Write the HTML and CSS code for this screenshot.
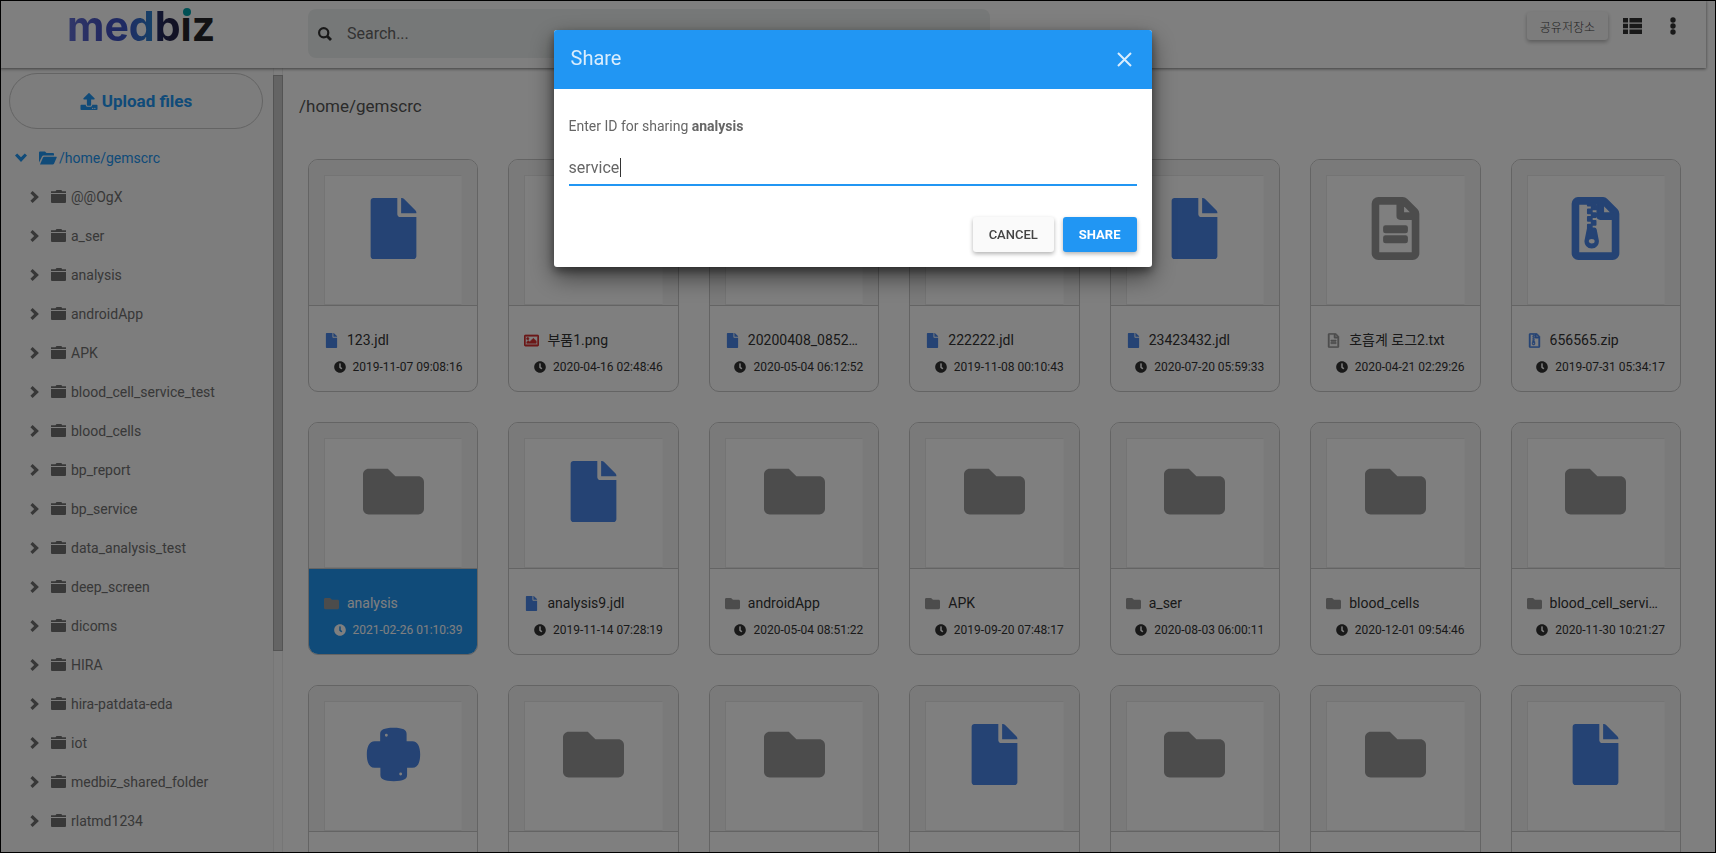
FILE: index.html
```html
<!DOCTYPE html>
<html lang="ko">
<head>
<meta charset="utf-8">
<title>medbiz</title>
<link rel="stylesheet" href="styles.css">
</head>
<body>
<svg class="sprite" aria-hidden="true">
  <symbol id="file" viewBox="0 0 384 512"><path d="M224 136V0H24C10.700 0 0 10.700 0 24v464c0 13.300 10.700 24 24 24h336c13.300 0 24-10.700 24-24V160H248c-13.200 0-24-10.800-24-24zm160-14.100v6.100H256V0h6.100c6.400 0 12.500 2.500 17 7l97.900 98c4.500 4.500 7 10.600 7 16.900z"/></symbol>
  <symbol id="folder" viewBox="0 0 512 512"><path d="M464 128H272l-64-64H48C21.490 64 0 85.490 0 112v288c0 26.510 21.490 48 48 48h416c26.510 0 48-21.490 48-48V176c0-26.510-21.490-48-48-48z"/></symbol>
  <symbol id="text" viewBox="-8 -8 400 528"><path stroke="currentColor" stroke-width="16" stroke-linejoin="round" d="M288 248v28c0 6.600-5.400 12-12 12H108c-6.600 0-12-5.400-12-12v-28c0-6.600 5.400-12 12-12h168c6.600 0 12 5.400 12 12zm-12 72H108c-6.600 0-12 5.400-12 12v28c0 6.600 5.400 12 12 12h168c6.600 0 12-5.400 12-12v-28c0-6.600-5.400-12-12-12zm108-188.100V464c0 26.500-21.500 48-48 48H48c-26.500 0-48-21.500-48-48V48C0 21.500 21.500 0 48 0h204.100C264.800 0 277 5.100 286 14.100L369.900 98c9 8.900 14.100 21.200 14.100 33.900zm-128-80V128h76.100L256 51.900zM336 464V176H232c-13.300 0-24-10.700-24-24V48H48v416h288z"/></symbol>
  <symbol id="zip" viewBox="-8 -8 400 528"><path stroke="currentColor" stroke-width="16" stroke-linejoin="round" d="M128.300 160v32h32v-32zm64-96h-32v32h32zm-64 32v32h32V96zm64 32h-32v32h32zm177.600-30.100L286 14C277 5 264.800-.1 252.100-.1H48C21.500 0 0 21.500 0 48v416c0 26.500 21.500 48 48 48h288c26.500 0 48-21.500 48-48V131.900c0-12.700-5.100-25-14.100-34zM256 51.900l76.100 76.100H256zM336 464H48V48h79.700v16h32V48H208v104c0 13.300 10.700 24 24 24h104zM194.200 265.700c-1.100-5.600-6-9.700-11.800-9.700h-22.100v-32h-32v32l-19.700 97.100C102 385.600 126.800 416 160 416c33.100 0 57.900-30.200 51.500-62.600zm-33.900 124.400c-17.900 0-32.400-12.100-32.400-27s14.500-27 32.400-27 32.400 12.100 32.400 27-14.500 27-32.400 27zm32-198.100h-32v32h32z"/></symbol>
  <symbol id="image" viewBox="0 0 512 512"><path stroke="currentColor" stroke-width="20" d="M464 64H48C21.490 64 0 85.490 0 112v288c0 26.510 21.490 48 48 48h416c26.510 0 48-21.490 48-48V112c0-26.510-21.490-48-48-48zm-6 336H54a6 6 0 0 1-6-6V118a6 6 0 0 1 6-6h404a6 6 0 0 1 6 6v276a6 6 0 0 1-6 6zM128 152c-22.091 0-40 17.909-40 40s17.909 40 40 40 40-17.909 40-40-17.909-40-40-40zM96 352h320v-80l-87.515-87.515c-4.686-4.686-12.284-4.686-16.971 0L192 304l-39.515-39.515c-4.686-4.686-12.284-4.686-16.971 0L96 304v48z"/></symbol>
  <symbol id="python" viewBox="0 0 448 512"><path fill-rule="evenodd" d="M112 144V84c0-34 30-52 112-52s110 18 110 52v60h48c46 0 66 46 66 112s-20 112-66 112h-44v60c0 34-30 52-112 52s-112-18-112-52v-60H66C20 368 0 322 0 256s20-112 66-112zM164 82a12 12 0 1 0 0 24 12 12 0 0 0 0-24zM284 408a12 12 0 1 0 0 24 12 12 0 0 0 0-24z"/></symbol>
  <symbol id="clock" viewBox="0 0 512 512"><path d="M256 8C119 8 8 119 8 256s111 248 248 248 248-111 248-248S393 8 256 8zm92.490 313l-20 25a16 16 0 0 1-22.490 2.500l-67-49.720a40 40 0 0 1-15-31.230V112a16 16 0 0 1 16-16h32a16 16 0 0 1 16 16v144l58 42.500a16 16 0 0 1 2.490 22.500z"/></symbol>
  <symbol id="chevron" viewBox="0 0 10 12"><path d="M2.600 0L.4 2.200 4.200 6 .4 9.800l2.200 2.200L8.900 6z"/></symbol>
  <symbol id="treefolder" viewBox="0 0 15 13"><path d="M0 1.200h4.500L5.500 0h5L11 1.200h4V3H0zM0 4h15v8q0 1-1 1H1q-1 0-1-1z"/></symbol>
  <symbol id="open" viewBox="0 0 18 14"><path d="M0 11.500V1.500Q0 .5 1 .5h5l1.500 1.500H14q1 0 1 1V4.500H4.500Q3.500 4.500 3 5.500zM1 13.500L4 6.500Q4.400 5.700 5.300 5.700H17.300Q18 5.700 17.700 6.500L15 12.700Q14.600 13.500 13.700 13.500z"/></symbol>
  <symbol id="upload" viewBox="0 0 512 512"><path d="M296 384h-80c-13.300 0-24-10.700-24-24V192h-87.700c-17.800 0-26.700-21.500-14.100-34.100L242.300 5.700c7.500-7.500 19.800-7.500 27.300 0l152.200 152.200c12.600 12.600 3.700 34.100-14.100 34.100H320v168c0 13.300-10.700 24-24 24zm216-8v112c0 13.300-10.700 24-24 24H24c-13.300 0-24-10.700-24-24V376c0-13.300 10.700-24 24-24h136v8c0 30.900 25.100 56 56 56h80c30.900 0 56-25.100 56-56v-8h136c13.300 0 24 10.700 24 24zm-124 88c0-11-9-20-20-20s-20 9-20 20 9 20 20 20 20-9 20-20zm64 0c0-11-9-20-20-20s-20 9-20 20 9 20 20 20 20-9 20-20z"/></symbol>
</svg>
<div class="app">
  <header class="topbar">
    <a class="logo" href="#"><span class="logo-med">med</span><span class="logo-b">b</span><span class="logo-i">ı</span><span class="logo-z">z</span></a>
    <label class="search">
      <svg class="i14" viewBox="0 0 14 14" fill="none" stroke="currentColor"><circle cx="5.700" cy="5.700" r="4.600" stroke-width="2.200"/><path d="M9 9l4 4" stroke-width="2.800"/></svg>
      <input type="search" placeholder="Search..." aria-label="Search">
    </label>
    <div class="tools">
      <button class="store">공유저장소</button>
      <button class="tool" aria-label="List view"><svg width="19" height="16" viewBox="0 0 19 16"><path d="M0 0h5v4.500H0zM6.500 0H19v4.500H6.500zM0 5.700h5v4.500H0zM6.500 5.700H19v4.500H6.500zM0 11.500h5V16H0zM6.500 11.500H19V16H6.500z"/></svg></button>
      <button class="tool" aria-label="More"><svg width="6" height="18" viewBox="0 0 6 18"><circle cx="3" cy="3" r="2.700"/><circle cx="3" cy="9" r="2.700"/><circle cx="3" cy="15" r="2.700"/></svg></button>
    </div>
  </header>
  <div class="body">
    <aside class="side">
      <div class="side-content">
        <button class="upload"><svg class="i17"><use href="#upload"/></svg>Upload files</button>
        <nav id="tree" class="tree" aria-label="Folders">
          <a class="root" href="#"><svg class="chev down"><use href="#chevron"/></svg><svg class="open"><use href="#open"/></svg>/home/gemscrc</a>
        </nav>
      </div>
      <div class="scroll"><div class="thumb"></div></div>
    </aside>
    <main class="main">
      <h1 class="path">/home/gemscrc</h1>
      <div id="grid" class="grid"></div>
    </main>
  </div>
</div>
<div class="overlay">
  <form class="modal" role="dialog" aria-labelledby="share-title">
    <div class="modal-head">
      <h2 id="share-title">Share</h2>
      <button type="button" class="close" aria-label="Close"><svg width="15" height="15" viewBox="0 0 15 15" fill="none" stroke="currentColor" stroke-width="2"><path d="M1 1l13 13M14 1L1 14"/></svg></button>
    </div>
    <div class="modal-body">
      <label for="share-id">Enter ID for sharing <b>analysis</b></label>
      <input id="share-id" class="field" type="text" value="service">
      <div class="actions"><button type="button" class="btn">CANCEL</button><button type="button" class="btn primary">SHARE</button></div>
    </div>
  </form>
</div>
<script src="app.js"></script>
</body>
</html>
```
FILE: styles.css
```css
* { box-sizing: border-box; }
body { margin: 0; font-family: Roboto, "Noto Sans CJK KR", sans-serif; font-size: 14px; color: #333; background: #fff; }
button, input { font: inherit; color: inherit; border: 0; background: none; padding: 0; }
a { color: inherit; text-decoration: none; }
svg { display: block; flex: none; fill: currentColor; }
svg[fill="none"] { fill: none; }
.sprite { position: absolute; width: 0; height: 0; }
.app { height: 100vh; overflow: hidden; display: flex; flex-direction: column; }
.topbar { flex: none; height: 68px; margin-right: 10px; padding: 9px 17px 0 67px; display: flex; align-items: flex-start; background: #fff; box-shadow: 0 1px 3px rgba(0,0,0,.5); z-index: 1; }
.logo { width: 241px; flex: none; font: 700 41px/34px Inter, sans-serif; }
.logo-med { color: transparent; background: linear-gradient(90deg, #6470d4, #4450c0 45%, #3c58c8 68%, #2a86d0); background-clip: text; -webkit-background-clip: text; }
.logo-b { color: transparent; background: linear-gradient(90deg, #24306c, #24244a 60%); background-clip: text; -webkit-background-clip: text; }
.logo-i { position: relative; color: #242428; }
.logo-i::before { content: ""; position: absolute; left: 2px; top: 7px; width: 8px; height: 8px; border-radius: 50%; background: #00a0a8; box-shadow: 0 0 0 1px #fff; }
.logo-z { color: #242428; }
.search { width: 682px; height: 49px; padding: 0 10px; display: flex; align-items: center; gap: 15px; border-radius: 8px; background: #edf1f0; font-size: 16px; }
.search input { flex: 1; min-width: 0; outline: 0; }
.search input::placeholder { color: #666; opacity: 1; }
.i14 { width: 14px; height: 14px; }
.i17 { width: 18px; height: 17px; }
.tools { margin-left: auto; display: flex; align-items: center; gap: 15px; padding-top: 3px; }
.store { height: 28px; padding: 0 13px; border-radius: 3px; background: #f8f8f8; color: #444; font-size: 12px; font-weight: 300; box-shadow: 0 2px 4px rgba(0,0,0,.3); }
.tool { display: flex; justify-content: center; width: 19px; }
.tool + .tool { width: 32px; }
.body { flex: 1; min-height: 0; display: flex; }
.side { width: 283px; flex: none; display: flex; background: #fafafa; }
.side-content { flex: 1; min-width: 0; padding: 5px 10px 0 9px; }
.upload { width: 100%; height: 56px; border: 1px solid #c8c8c8; border-radius: 28px; display: flex; align-items: center; justify-content: center; gap: 4px; font-size: 17px; font-weight: 700; color: #2196f3; }
.scroll { width: 10px; padding-top: 7px; border-left: 1px solid #ececec; border-right: 1px solid #ececec; background: #fdfdfd; }
.thumb { height: 74%; margin: 0 -1px; background: #c8c8c8; border: 1px solid #a8a8a8; }
.tree { padding-top: 9px; color: #707070; }
.tree a { display: flex; align-items: center; height: 39px; padding-left: 21px; }
.tree a.root { padding-left: 6px; color: #2196f3; }
.chev { width: 10px; height: 12px; margin-right: 11px; }
.down { transform: rotate(90deg); margin: 0 13px 0 1px; }
.open { width: 18px; height: 14px; margin-right: 2px; }
.tf { width: 15px; height: 13px; margin-right: 5px; }
.main { flex: 1; min-width: 0; padding: 27px 35px 0 16px; }
.path { margin: 0; font-size: 17px; line-height: 22px; font-weight: 400; color: #555; }
.grid { display: grid; grid-template-columns: repeat(7, minmax(0, 1fr)); gap: 30px; padding: 42px 0 0 9px; }
.card { display: block; border: 1px solid #c8c8c8; border-radius: 10px; overflow: hidden; background: #fff; color: #333; }
.preview { padding: 15px 15px 0; background: #f5f5f5; border-bottom: 1px solid #c8c8c8; }
.inner { height: 130px; padding-bottom: 23px; display: flex; align-items: center; justify-content: center; background: #fff; border: 1px solid #e8e8e8; border-right-color: #fafafa; }
.big { width: 61px; height: 61px; }
.big.text, .big.zip { height: 63px; }
.info { height: 85px; padding: 24px 15px 0; }
.name { display: flex; align-items: center; gap: 8px; line-height: 20px; }
.name span { overflow: hidden; white-space: nowrap; text-overflow: ellipsis; }
.small { width: 15px; height: 15px; }
.date { display: flex; align-items: center; justify-content: flex-end; gap: 7px; margin-top: 9px; font-size: 12px; line-height: 16px; }
.date svg { width: 12px; height: 12px; }
.blue { color: #4a86e8; }
.gray { color: #999; }
.red { color: #d83030; }
.selected .info { background: #2196f3; color: #fff; }
.overlay { position: fixed; inset: 0; z-index: 10; background: rgba(0,0,0,.5); border: 1px solid #000; padding: 29px 11px 0 0; }
.modal { width: 598px; max-width: 100%; margin: 0 auto; border-radius: 3px; overflow: hidden; background: #fff; box-shadow: 0 10px 24px rgba(0,0,0,.5), 0 4px 10px rgba(0,0,0,.4); }
.modal-head { height: 59px; padding: 0 20px 0 17px; display: flex; align-items: center; justify-content: space-between; background: #2196f3; color: #d9edfd; }
.modal-head h2 { margin: 0; padding-bottom: 3px; font-size: 20px; font-weight: 400; }
.modal-body { padding: 27px 15px 15px; color: #666; }
.modal-body label { display: block; line-height: 20px; }
.field { display: block; width: 100%; height: 35px; margin-top: 15px; border-bottom: 2px solid #2196f3; outline: 0; font-size: 16px; background: linear-gradient(#333, #333) 51px 7px / 1px 19px no-repeat; }
.actions { margin-top: 31px; display: flex; justify-content: flex-end; gap: 9px; }
.btn { height: 35px; padding: 0 16px; border-radius: 3px; background: #fafafa; color: #444; font-size: 13px; font-weight: 500; box-shadow: 0 2px 4px rgba(0,0,0,.3); }
.primary { background: #2196f3; color: #fff; font-weight: 700; }
```
FILE: app.js
```js
const folders = ["@@OgX", "a_ser", "analysis", "androidApp", "APK", "blood_cell_service_test", "blood_cells", "bp_report", "bp_service", "data_analysis_test", "deep_screen", "dicoms", "HIRA", "hira-patdata-eda", "iot", "medbiz_shared_folder", "rlatmd1234"];
const files = [
  ["file", "123.jdl", "2019-11-07 09:08:16"],
  ["image", "부품1.png", "2020-04-16 02:48:46"],
  ["file", "20200408_085200.jdl", "2020-05-04 06:12:52"],
  ["file", "222222.jdl", "2019-11-08 00:10:43"],
  ["file", "23423432.jdl", "2020-07-20 05:59:33"],
  ["text", "호흡계 로그2.txt", "2020-04-21 02:29:26"],
  ["zip", "656565.zip", "2019-07-31 05:34:17"],
  ["folder", "analysis", "2021-02-26 01:10:39"],
  ["file", "analysis9.jdl", "2019-11-14 07:28:19"],
  ["folder", "androidApp", "2020-05-04 08:51:22"],
  ["folder", "APK", "2019-09-20 07:48:17"],
  ["folder", "a_ser", "2020-08-03 06:00:11"],
  ["folder", "blood_cells", "2020-12-01 09:54:46"],
  ["folder", "blood_cell_service_test", "2020-11-30 10:21:27"],
  ["python"], ["folder"], ["folder"], ["file"], ["folder"], ["folder"], ["file"]
];
const colors = { file: "blue", zip: "blue", python: "blue", folder: "gray", text: "gray", image: "red" };
const icon = (id, cls) => `<svg class="${cls}"><use href="#${id}"/></svg>`;

document.getElementById("tree").insertAdjacentHTML("beforeend",
  folders.map(f => `<a href="#">${icon("chevron", "chev")}${icon("treefolder", "tf")}${f}</a>`).join(""));

document.getElementById("grid").innerHTML = files.map(([type, name, date]) => `
  <a href="#" class="card${name === "analysis" ? " selected" : ""}">
    <div class="preview"><div class="inner">${type === "image" ? "" : icon(type, `big ${type} ${colors[type]}`)}</div></div>
    <div class="info">${name ? `<div class="name">${icon(type, `small ${colors[type]}`)}<span>${name}</span></div><div class="date">${icon("clock", "")}${date}</div>` : ""}</div>
  </a>`).join("");
```
